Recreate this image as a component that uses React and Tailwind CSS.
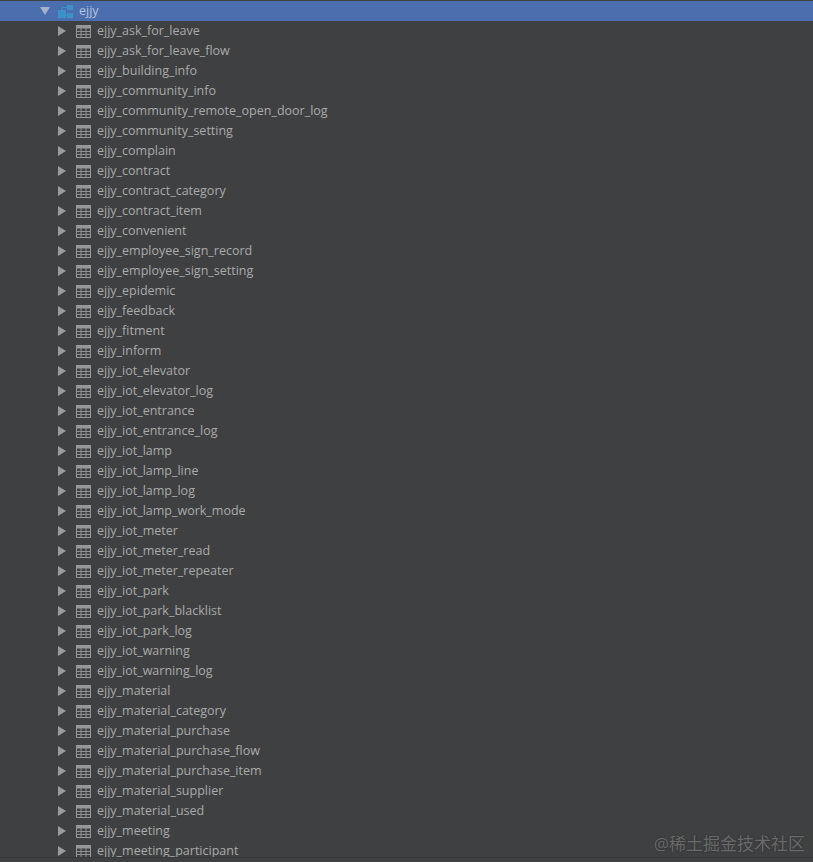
const TABLES = [
  'ejjy_ask_for_leave',
  'ejjy_ask_for_leave_flow',
  'ejjy_building_info',
  'ejjy_community_info',
  'ejjy_community_remote_open_door_log',
  'ejjy_community_setting',
  'ejjy_complain',
  'ejjy_contract',
  'ejjy_contract_category',
  'ejjy_contract_item',
  'ejjy_convenient',
  'ejjy_employee_sign_record',
  'ejjy_employee_sign_setting',
  'ejjy_epidemic',
  'ejjy_feedback',
  'ejjy_fitment',
  'ejjy_inform',
  'ejjy_iot_elevator',
  'ejjy_iot_elevator_log',
  'ejjy_iot_entrance',
  'ejjy_iot_entrance_log',
  'ejjy_iot_lamp',
  'ejjy_iot_lamp_line',
  'ejjy_iot_lamp_log',
  'ejjy_iot_lamp_work_mode',
  'ejjy_iot_meter',
  'ejjy_iot_meter_read',
  'ejjy_iot_meter_repeater',
  'ejjy_iot_park',
  'ejjy_iot_park_blacklist',
  'ejjy_iot_park_log',
  'ejjy_iot_warning',
  'ejjy_iot_warning_log',
  'ejjy_material',
  'ejjy_material_category',
  'ejjy_material_purchase',
  'ejjy_material_purchase_flow',
  'ejjy_material_purchase_item',
  'ejjy_material_supplier',
  'ejjy_material_used',
  'ejjy_meeting',
  'ejjy_meeting_participant',
];

function TableIcon() {
  return (
    <svg width="15" height="13" viewBox="0 0 15 13" className="shrink-0">
      <rect x="0.5" y="0.5" width="14" height="12" fill="none" stroke="#96999b" />
      <rect x="0.5" y="0.5" width="14" height="3" fill="#96999b" />
      <path d="M5 3v9M10 3v9M1 6.5h13M1 9.5h13" stroke="#8f9294" strokeWidth="1" />
    </svg>
  );
}

function SchemaIcon() {
  return (
    <svg width="15" height="13" viewBox="0 0 15 13" className="shrink-0">
      <rect x="0" y="5" width="8" height="8" fill="#3d92c9" />
      <rect x="9" y="0" width="6" height="5" fill="#3d92c9" />
      <rect x="9" y="8" width="6" height="5" fill="#3d92c9" />
      <path d="M4 5V2.5h5M8 10.5h1" stroke="#3d92c9" fill="none" />
    </svg>
  );
}

function Row({ name }) {
  return (
    <div className="h-5 flex items-center pl-[58px]">
      <span className="w-0 h-0 border-y-[5px] border-y-transparent border-l-[8px] border-l-[#9b9b9b] shrink-0" />
      <span className="ml-[10px] flex">
        <TableIcon />
      </span>
      <span className="ml-[6px] text-[12.5px] text-[#a9abab] whitespace-nowrap">{name}</span>
    </div>
  );
}

export default function App() {
  return (
    <div
      className="relative w-[813px] h-[862px] overflow-hidden bg-[#3f4041]"
      style={{ fontFamily: '"Open Sans", "Noto Sans CJK SC", sans-serif' }}
    >
      {/* list is cut off a few px above the window edge */}
      <div className="h-[858px] overflow-hidden pt-px border-b border-[#37383a]">
        <div className="h-5 flex items-center pl-[40px] bg-[#4b6eaf]">
          <span className="w-0 h-0 border-x-[5px] border-x-transparent border-t-[8px] border-t-[#a3b1ca] shrink-0" />
          <span className="ml-[8px] flex">
            <SchemaIcon />
          </span>
          <span className="ml-[6px] text-[12.5px] text-[#b5c3dc]">ejjy</span>
        </div>
        {TABLES.map((t) => (
          <Row key={t} name={t} />
        ))}
      </div>
      <div className="absolute right-[8px] bottom-[6px] text-[17px] text-[#686a6b] [text-shadow:0_0_2px_#2e2e2e]">
        @稀土掘金技术社区
      </div>
    </div>
  );
}
